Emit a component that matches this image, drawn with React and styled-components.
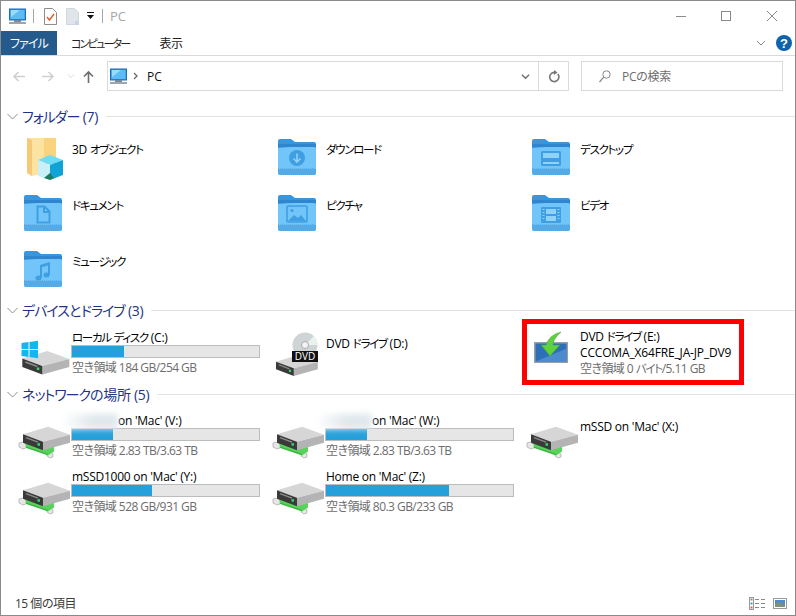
import React from 'react'
import styled, { createGlobalStyle } from 'styled-components'

const GlobalStyle = createGlobalStyle`
  html, body {
    margin: 0;
    padding: 0;
    background: #fff;
  }
  body {
    font-family: "Open Sans", "Noto Sans CJK JP", sans-serif;
    font-feature-settings: "palt";
    font-size: 12px;
    color: #000;
  }
  * {
    box-sizing: border-box;
  }
`

const Window = styled.div`
  width: 796px;
  height: 616px;
  display: flex;
  flex-direction: column;
  border: 1px solid #8a8a8a;
  background: #fff;
  overflow: hidden;
`

const TitleBar = styled.div`
  height: 30px;
  display: flex;
  align-items: center;
  padding-left: 8px;
  flex-shrink: 0;
`

const TitleSep = styled.div`
  width: 1px;
  height: 14px;
  background: #a8a8a8;
  margin-left: ${(p) => p.$left}px;
`

const QuickSlot = styled.div`
  display: flex;
  margin-left: ${(p) => p.$left}px;
`

const TitleText = styled.div`
  margin-left: 7px;
  font-size: 13px;
  color: #a6a6a6;
`

const WindowControls = styled.div`
  margin-left: auto;
  display: flex;
  align-items: center;
  gap: 35px;
  padding-right: 18px;
  svg:last-child {
    margin-left: 1px;
  }
`

const RibbonTabs = styled.div`
  height: 25px;
  display: flex;
  align-items: stretch;
  border-bottom: 1px solid #dadada;
  flex-shrink: 0;
`

const FileTab = styled.div`
  width: 56px;
  height: 24px;
  background: #245a8c;
  color: #fff;
  display: flex;
  align-items: center;
  justify-content: center;
  letter-spacing: -0.9px;
`

const RibbonTab = styled.div`
  display: flex;
  align-items: center;
  margin-left: ${(p) => p.$left}px;
  color: #222;
  font-size: ${(p) => (p.$tight ? 11 : 12)}px;
  letter-spacing: ${(p) => (p.$tight ? -1.8 : -0.4)}px;
`

const RibbonRight = styled.div`
  margin-left: auto;
  display: flex;
  align-items: center;
  gap: 10px;
  padding-right: 3px;
`

const NavBar = styled.div`
  height: 30px;
  margin-top: 5px;
  display: flex;
  align-items: center;
  padding-left: 11px;
  flex-shrink: 0;
`

const NavButtons = styled.div`
  width: 95px;
  display: flex;
  align-items: center;
`

const NavButton = styled.div`
  display: flex;
  margin-left: ${(p) => p.$left || 0}px;
`

const AddressBox = styled.div`
  width: 462px;
  height: 30px;
  border: 1px solid #d9d9d9;
  display: flex;
  align-items: center;
  padding-left: 2px;
`

const CrumbArrow = styled.div`
  display: flex;
  margin-left: 6px;
`

const Crumb = styled.span`
  font-size: 12px;
  margin-left: 8px;
  color: #111;
`

const AddressRight = styled.div`
  margin-left: auto;
  height: 100%;
  display: flex;
  align-items: center;
`

const RefreshCell = styled.div`
  width: 30px;
  height: 100%;
  margin-left: 8px;
  border-left: 1px solid #d9d9d9;
  display: flex;
  align-items: center;
  justify-content: center;
`

const SearchBox = styled.div`
  width: 202px;
  height: 30px;
  margin-left: 12px;
  border: 1px solid #d9d9d9;
  display: flex;
  align-items: center;
  padding-left: 17px;
  gap: 11px;
  color: #6d6d6d;
  letter-spacing: -0.3px;
`

const Content = styled.div`
  flex: 1;
  padding-top: 16px;
  min-height: 0;
`

const Kana = styled.span`
  font-size: 11.5px;
  letter-spacing: -1.3px;
`

const SectionHeader = styled.div`
  height: 18px;
  margin-top: ${(p) => p.$top || 0}px;
  padding-left: 6px;
  display: flex;
  align-items: center;
  color: #1e3287;
  font-size: 14px;
  letter-spacing: -0.3px;
  ${Kana} {
    font-size: 14px;
    letter-spacing: -1px;
  }
`

const HeaderTitle = styled.span`
  margin-left: 4px;
  white-space: pre;
`

const HeaderLine = styled.div`
  flex: 1;
  height: 1px;
  margin-left: 8px;
  background: #e3e3e3;
`

const TileGrid = styled.div`
  display: grid;
  grid-template-columns: repeat(3, 254px);
  grid-auto-rows: 56px;
  padding-left: 19px;
  margin-top: ${(p) => p.$top}px;
`

const Tile = styled.div`
  position: relative;
  display: flex;
  gap: 4px;
  padding-right: 13px;
`

const IconSlot = styled.div`
  width: 48px;
  height: 48px;
  margin-top: 4px;
  flex-shrink: 0;
  svg {
    display: block;
    overflow: visible;
  }
`

const TileText = styled.div`
  flex: 1;
  min-width: 0;
  padding-top: ${(p) => p.$top}px;
`

const TileLabel = styled.div`
  height: 16px;
  line-height: 19px;
  white-space: nowrap;
  letter-spacing: ${(p) => (p.$wide ? -0.16 : -0.25)}px;
`

const Redacted = styled.span`
  display: inline-block;
  width: 56px;
  height: 15px;
  margin-left: -10px;
  vertical-align: middle;
  background: linear-gradient(to right, #fff, #dfe8ec 55%);
  filter: blur(3px);
`

const UsageBar = styled.div`
  height: 13px;
  margin: 1px 1px 0 -1px;
  background: #e6e6e6;
  border: 1px solid #bcbcbc;
`

const UsageFill = styled.div`
  height: 100%;
  background: #26a0da;
`

const FreeSpace = styled.div`
  height: 16px;
  line-height: 20px;
  color: #6d6d6d;
  white-space: nowrap;
  letter-spacing: -0.55px;
`

const Highlight = styled.div`
  position: absolute;
  left: -6px;
  top: -6px;
  width: 222px;
  height: 66px;
  border: 5px solid #f00;
  pointer-events: none;
`

const StatusBar = styled.div`
  height: 24px;
  display: flex;
  align-items: center;
  padding: 0 8px 0 14px;
  color: #3c3c3c;
  letter-spacing: -0.5px;
  flex-shrink: 0;
`

const ViewButtons = styled.div`
  margin-left: auto;
  display: flex;
  align-items: center;
  gap: 7px;
`

const PcIcon = () => (
  <svg width="17" height="17" viewBox="0 0 17 17">
    <rect x="0.5" y="1" width="16" height="11" fill="#2f8fdc" stroke="#1f6fb5" />
    <rect x="1.5" y="2" width="14" height="9" fill="#5dbcf5" />
    <path d="M2 2h9L2 9z" fill="#9adcfb" />
    <rect x="5" y="12" width="7" height="2" fill="#7b8a96" />
    <rect x="0" y="14" width="17" height="2" fill="#9aa6b0" />
  </svg>
)

const CheckDocIcon = () => (
  <svg width="13" height="17" viewBox="0 0 13 17">
    <path d="M.5.5h8l4 4v12H.5z" fill="#fff" stroke="#8c8c8c" />
    <path d="M3 9l2.5 3L10 6" fill="none" stroke="#e0612a" strokeWidth="1.5" />
  </svg>
)

const BlankDocIcon = () => (
  <svg width="13" height="17" viewBox="0 0 13 17">
    <path d="M.5.5h8l4 4v12H.5z" fill="#dfe5ea" stroke="#cfd6dc" />
    <path d="M9 13h4v4H9z" fill="#c7d5e2" />
  </svg>
)

const QuickMenuIcon = () => (
  <svg width="7" height="8" viewBox="0 0 7 8">
    <rect x="0" y="0" width="7" height="1" fill="#111" />
    <path d="M0 3h7L3.5 7z" fill="#111" />
  </svg>
)

const MinIcon = () => (
  <svg width="10" height="10" viewBox="0 0 10 10">
    <path d="M0 5.5h10" stroke="#8a8a8a" />
  </svg>
)

const MaxIcon = () => (
  <svg width="10" height="10" viewBox="0 0 10 10">
    <rect x="0.5" y="0.5" width="9" height="9" fill="none" stroke="#8a8a8a" />
  </svg>
)

const CloseIcon = () => (
  <svg width="10" height="10" viewBox="0 0 10 10">
    <path d="M0 0l10 10M10 0L0 10" stroke="#8a8a8a" />
  </svg>
)

const ChevronDown = ({ color = '#8a8a8a', size = 9, width = 1 }) => (
  <svg width={size} height={size} viewBox="0 0 10 10">
    <path d="M1 3l4 4 4-4" fill="none" stroke={color} strokeWidth={width} />
  </svg>
)

const HelpIcon = () => (
  <svg width="16" height="16" viewBox="0 0 16 16">
    <circle cx="8" cy="8" r="8" fill="#0f62ac" />
    <text x="8" y="12.5" textAnchor="middle" fontSize="13" fontWeight="700" fontFamily="Liberation Sans" fill="#fff">?</text>
  </svg>
)

const ArrowIcon = ({ dir = 'left', color = '#d0d0d0' }) => {
  const d = {
    left: 'M13 6.5H2M6.5 2L2 6.5 6.5 11',
    right: 'M0 6.5h11M6.5 2L11 6.5 6.5 11',
    up: 'M6.5 13V2M2 6.5L6.5 2 11 6.5',
  }[dir]
  return (
    <svg width="13" height="13" viewBox="0 0 13 13">
      <path d={d} fill="none" stroke={color} strokeWidth="1.6" />
    </svg>
  )
}

const CrumbChevron = () => (
  <svg width="6" height="8" viewBox="0 0 6 8">
    <path d="M1 1l3 3-3 3" fill="none" stroke="#666" strokeWidth="1.3" />
  </svg>
)

const RefreshIcon = () => (
  <svg width="12" height="13" viewBox="0 0 12 13">
    <path d="M9.8 4A4.6 4.6 0 1 1 6 2.4H8" fill="none" stroke="#777" strokeWidth="1.6" />
    <path d="M6 0l3.5 2.4L6 5z" fill="#777" />
  </svg>
)

const SearchIcon = () => (
  <svg width="12" height="13" viewBox="0 0 12 13">
    <circle cx="7.5" cy="4.5" r="3.7" fill="none" stroke="#888" />
    <path d="M4.8 7.2L.5 12" stroke="#888" strokeWidth="1.2" />
  </svg>
)

const HeaderChevron = () => (
  <svg width="11" height="7" viewBox="0 0 11 7">
    <path d="M.5 1l5 5 5-5" fill="none" stroke="#8e8e8e" />
  </svg>
)

const FolderIcon = ({ children }) => (
  <svg width="48" height="48" viewBox="0 0 48 48">
    <path d="M4 6q0-2 2-2h11l4 3h19q2 0 2 2v6H4z" fill="#3a96dc" />
    <rect x="4" y="9" width="38" height="3" fill="#2f86cf" />
    <path d="M4 13l13-1h23q2 0 2 2v24q0 2-2 2H6q-2 0-2-2z" fill="#72c5f8" />
    <path d="M4 34h38v4q0 2-2 2H6q-2 0-2-2z" fill="#55abe8" />
    <path d="M4 33.5h38" stroke="#5cb0ea" strokeDasharray="1 1" />
    {children}
  </svg>
)

const glyph = '#3f9fe2'

const DownloadGlyph = () => (
  <g>
    <circle cx="23" cy="23" r="8" fill={glyph} />
    <path d="M23 18.5v8M19.5 23.5l3.5 3.5 3.5-3.5" fill="none" stroke="#8fd2fa" strokeWidth="1.6" />
  </g>
)

const DesktopGlyph = () => (
  <g>
    <rect x="13" y="16" width="20" height="15" rx="1.5" fill={glyph} />
    <rect x="15" y="18" width="16" height="5" fill="#8fd2fa" />
    <rect x="15" y="27" width="16" height="2" fill="#8fd2fa" />
  </g>
)

const DocumentGlyph = () => (
  <path d="M17.5 15.5h7l5 5v11h-12zM24 15.5v5.5h5.5" fill="none" stroke={glyph} strokeWidth="2" />
)

const PictureGlyph = () => (
  <g>
    <rect x="13" y="15" width="20" height="16" rx="1" fill="none" stroke={glyph} strokeWidth="1.6" />
    <path d="M14 30l6-6 4 3 3-3 5 6z" fill={glyph} />
    <circle cx="18" cy="19.5" r="1.6" fill={glyph} />
  </g>
)

const VideoGlyph = () => (
  <g>
    <rect x="13" y="16" width="20" height="16" rx="1" fill={glyph} />
    <rect x="18" y="18" width="10" height="5" fill="#8fd2fa" />
    <rect x="18" y="25" width="10" height="5" fill="#8fd2fa" />
    <path d="M14.5 18.5h2M14.5 21.5h2M14.5 24.5h2M14.5 27.5h2M29.5 18.5h2M29.5 21.5h2M29.5 24.5h2M29.5 27.5h2" stroke="#8fd2fa" />
  </g>
)

const MusicGlyph = () => (
  <g fill={glyph}>
    <path d="M20 18l10-3v13h-2V18.5l-6 1.8V31h-2z" />
    <ellipse cx="18.5" cy="31" rx="3" ry="2.5" />
    <ellipse cx="26.5" cy="28" rx="3" ry="2.5" />
  </g>
)

const ObjectsIcon = () => (
  <svg width="48" height="48" viewBox="0 0 48 48">
    <path d="M7 3h17l0 35-12 3-5-3z" fill="#fce3a0" />
    <path d="M7 3l5 2v36l-5-3z" fill="#f6c978" />
    <path d="M24 3h12v26H24z" fill="#fbd27e" />
    <path d="M29 29l7-3 0 3z" fill="#eec06a" />
    <path d="M18 25l12-5 13 5-13 5z" fill="#6fdcf5" />
    <path d="M18 25l12 5v15l-12-4z" fill="#c9f0f9" />
    <path d="M30 30l13-5v15l-13 5z" fill="#0fa3d6" />
    <path d="M24 43l6-5 4 5-4 2z" fill="#1c7d5f" />
  </svg>
)

// isometric drive: top face, dark front face on the left, pale side on the right
const DriveBody = ({ x = 0, y = 0, scale = 1 }) => (
  <g transform={`translate(${x} ${y}) scale(${scale})`}>
    <path d="M0 7.5L25 0l22 8-27 7z" fill="#d6d6d6" />
    <path d="M20 15l27-7v8l-27 7.5z" fill="#b4b4b4" />
    <path d="M0 7.5L20 15v8.5L0 16z" fill="#3a3a3a" />
    <path d="M3 11l12 4.5" stroke="#8c8c8c" strokeWidth="1.4" />
    <rect x="14.5" y="16.5" width="2.5" height="2.5" fill="#38d66b" />
  </g>
)

const LocalDiskIcon = () => (
  <svg width="48" height="48" viewBox="0 0 48 48">
    <DriveBody x={2.3} y={22} />
    <path d="M1.5 14l7-1v7h-7zM9.5 13l8.5-1.200v8.200H9.500zM1.500 21h7v7l-7-1zM9.500 21H18v8.200L9.500 28z" fill="#12b6f0" />
  </svg>
)

const DvdIcon = () => (
  <svg width="48" height="48" viewBox="0 0 48 48">
    <circle cx="31" cy="16" r="12.500" fill="#cfd4d6" />
    <path d="M31 16l9-9a12.500 12.500 0 0 1 3.500 9z" fill="#e8f3ee" />
    <circle cx="31" cy="16" r="3.500" fill="#f4f4f4" stroke="#aaa" />
    <DriveBody x={2} y={26} scale={0.89} />
    <rect x="18" y="22" width="26" height="11" fill="#111" />
    <text x="31" y="31" textAnchor="middle" fontSize="10" fontFamily="Open Sans" fill="#fff">DVD</text>
  </svg>
)

const MountIcon = () => (
  <svg width="48" height="48" viewBox="0 0 48 48">
    <rect x="6" y="13" width="34" height="21" fill="#98a1a8" />
    <rect x="7.500" y="14.500" width="31" height="18" fill="#2f6eb8" />
    <path d="M7.500 32.500l31-13v13z" fill="#4d8ccc" />
    <path d="M33 3Q21 6 18 16h-5l9 11 10-11h-7q0-6 8-13z" fill="#5fd13f" stroke="#3da52b" strokeWidth="0.5" />
  </svg>
)

const NetworkIcon = () => (
  <svg width="48" height="48" viewBox="0 0 48 48">
    <path d="M-1 31l3-1 5 2-1 4-3 1-4-2zM27 41l3-1 3 2v3l-3 1-3-2z" fill="#e6e6e6" stroke="#9c9c9c" strokeWidth="0.6" />
    <path d="M5 30l1 6 22 7.500 6-4V32z" fill="#58d35a" />
    <path d="M6 35l22 7.500" stroke="#2fa53a" strokeWidth="0.8" />
    <DriveBody x={3} y={14.700} />
  </svg>
)

const ListViewIcon = () => (
  <svg width="17" height="13" viewBox="0 0 17 13">
    <rect x="0.5" y="0.5" width="4" height="12" fill="#fff" stroke="#9a9a9a" />
    <rect x="1.5" y="1.5" width="2" height="2" fill="#8a8a8a" />
    <rect x="1.5" y="5.5" width="2" height="2" fill="#3d9be0" />
    <rect x="1.5" y="9.5" width="2" height="2" fill="#e0612a" />
    <path d="M6 2.5h4M12 2.5h4M6 6.5h4M12 6.5h4M6 10.5h4M12 10.5h4" stroke="#8a8a8a" />
  </svg>
)

const TileViewIcon = () => (
  <svg width="14" height="11" viewBox="0 0 14 11">
    <rect x="0.5" y="0.5" width="13" height="10" fill="#fff" stroke="#9a9a9a" />
    <rect x="2" y="2" width="10" height="7" fill="#4d8ccc" />
    <path d="M2 6l4-2 6 3v2H2z" fill="#7d8f7e" />
  </svg>
)

// katakana runs set tighter than latin, like the narrow UI font of the original
const Jp = ({ text }) =>
  text.split(/([\u30a0-\u30ff]+)/).map((part, i) =>
    i % 2 ? <Kana key={i}>{part}</Kana> : part
  )

const folders = [
  { name: '3D オブジェクト', icon: <ObjectsIcon /> },
  { name: 'ダウンロード', icon: <FolderIcon><DownloadGlyph /></FolderIcon> },
  { name: 'デスクトップ', icon: <FolderIcon><DesktopGlyph /></FolderIcon> },
  { name: 'ドキュメント', icon: <FolderIcon><DocumentGlyph /></FolderIcon> },
  { name: 'ピクチャ', icon: <FolderIcon><PictureGlyph /></FolderIcon> },
  { name: 'ビデオ', icon: <FolderIcon><VideoGlyph /></FolderIcon> },
  { name: 'ミュージック', icon: <FolderIcon><MusicGlyph /></FolderIcon> },
]

const networkDrives = [
  { name: "on 'Mac' (V:)", hidden: true, free: '空き領域 2.83 TB/3.63 TB', used: 22 },
  { name: "on 'Mac' (W:)", hidden: true, free: '空き領域 2.83 TB/3.63 TB', used: 22 },
  { name: "mSSD on 'Mac' (X:)" },
  { name: "mSSD1000 on 'Mac' (Y:)", free: '空き領域 528 GB/931 GB', used: 43 },
  { name: "Home on 'Mac' (Z:)", free: '空き領域 80.3 GB/233 GB', used: 66 },
]

const DriveTile = ({ icon, name, hidden, extra, free, used, marked }) => (
  <Tile>
    <IconSlot>{icon}</IconSlot>
    <TileText $top={free ? (extra ? 2 : 3) : 9}>
      <TileLabel>
        {hidden && <Redacted />}
        <Jp text={name} />
      </TileLabel>
      {extra && <TileLabel $wide>{extra}</TileLabel>}
      {used !== undefined && (
        <UsageBar>
          <UsageFill style={{ width: `${used}%` }} />
        </UsageBar>
      )}
      {free && <FreeSpace><Jp text={free} /></FreeSpace>}
    </TileText>
    {marked && <Highlight />}
  </Tile>
)

const Section = ({ title, top, gridTop, children }) => (
  <>
    <SectionHeader $top={top}>
      <HeaderChevron />
      <HeaderTitle><Jp text={title} /></HeaderTitle>
      <HeaderLine />
    </SectionHeader>
    <TileGrid $top={gridTop}>{children}</TileGrid>
  </>
)

const App = () => {
  return (
    <>
      <GlobalStyle />
      <Window>
        <TitleBar>
          <PcIcon />
          <TitleSep $left={7} />
          <QuickSlot $left={10}><CheckDocIcon /></QuickSlot>
          <QuickSlot $left={9}><BlankDocIcon /></QuickSlot>
          <QuickSlot $left={8}><QuickMenuIcon /></QuickSlot>
          <TitleSep $left={8} />
          <TitleText>PC</TitleText>
          <WindowControls>
            <MinIcon />
            <MaxIcon />
            <CloseIcon />
          </WindowControls>
        </TitleBar>
        <RibbonTabs>
          <FileTab>ファイル</FileTab>
          <RibbonTab $left={14} $tight>コンピューター</RibbonTab>
          <RibbonTab $left={30}>表示</RibbonTab>
          <RibbonRight>
            <ChevronDown size={10} />
            <HelpIcon />
          </RibbonRight>
        </RibbonTabs>
        <NavBar>
          <NavButtons>
            <NavButton><ArrowIcon dir="left" /></NavButton>
            <NavButton $left={17}><ArrowIcon dir="right" /></NavButton>
            <NavButton $left={12}><ChevronDown color="#d0d0d0" size={8} /></NavButton>
            <NavButton $left={7}><ArrowIcon dir="up" color="#6d6d6d" /></NavButton>
          </NavButtons>
          <AddressBox>
            <PcIcon />
            <CrumbArrow><CrumbChevron /></CrumbArrow>
            <Crumb>PC</Crumb>
            <AddressRight>
              <ChevronDown color="#6d6d6d" size={9} width={1.5} />
              <RefreshCell><RefreshIcon /></RefreshCell>
            </AddressRight>
          </AddressBox>
          <SearchBox>
            <SearchIcon />
            <span>PCの検索</span>
          </SearchBox>
        </NavBar>
        <Content>
          <Section title="フォルダー (7)" gridTop={6}>
            {folders.map((f) => (
              <Tile key={f.name}>
                <IconSlot>{f.icon}</IconSlot>
                <TileText $top={9}>
                  <TileLabel><Jp text={f.name} /></TileLabel>
                </TileText>
              </Tile>
            ))}
          </Section>
          <Section title="デバイスとドライブ (3)" top={2} gridTop={6}>
            <DriveTile icon={<LocalDiskIcon />} name="ローカル ディスク (C:)" free="空き領域 184 GB/254 GB" used={28} />
            <DriveTile icon={<DvdIcon />} name="DVD ドライブ (D:)" />
            <DriveTile
              icon={<MountIcon />}
              name="DVD ドライブ (E:)"
              extra="CCCOMA_X64FRE_JA-JP_DV9"
              free="空き領域 0 バイト/5.11 GB"
              marked
            />
          </Section>
          <Section title="ネットワークの場所 (5)" top={4} gridTop={5}>
            {networkDrives.map((d) => (
              <DriveTile key={d.name} icon={<NetworkIcon />} {...d} />
            ))}
          </Section>
        </Content>
        <StatusBar>
          15 個の項目
          <ViewButtons>
            <ListViewIcon />
            <TileViewIcon />
          </ViewButtons>
        </StatusBar>
      </Window>
    </>
  )
}

export default App
